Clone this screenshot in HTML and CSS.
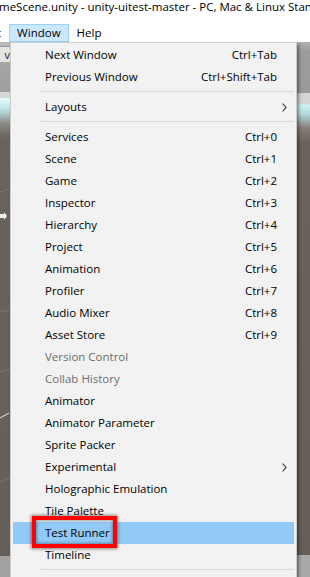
FILE: index.html
```html
<!DOCTYPE html>
<html>

<head>
    <meta charset="utf-8">
    <title>Unity - Window menu</title>
    <link rel="stylesheet" href="styles.css">
</head>

<body>
    <div class="screen">
        <div class="titlebar">meScene.unity - unity-uitest-master - PC, Mac &amp; Linux Standalone</div>

        <div class="menubar">
            <span class="menubar-item">t</span>
            <span class="menubar-item active">Window</span>
            <span class="menubar-item">Help</span>
        </div>

        <div class="workspace">
            <div class="pane pane-left">
                <div class="tool-btn">v</div>
                <svg class="scene-marks" width="10" height="514" viewBox="0 0 10 514">
                    <path d="M0 172 L4 172 L4 170 L7 174 L4 178 L4 176 L0 176 Z" fill="#f4f4f4" />
                    <path d="M0 376 L9 371" stroke="#e8e8e8" stroke-width="1" fill="none" />
                    <path d="M0 150 L10 147 M0 270 L10 268 M0 330 L10 327 M0 440 L10 436" stroke="#7a736d" stroke-width="1" fill="none" />
                </svg>
            </div>
            <div class="pane pane-right"></div>

            <!-- Window dropdown -->
            <div class="dropdown">
                <div class="menu-item"><span>Next Window</span><span class="shortcut">Ctrl+Tab</span></div>
                <div class="menu-item"><span>Previous Window</span><span class="shortcut">Ctrl+Shift+Tab</span></div>
                <div class="menu-sep"></div>
                <div class="menu-item"><span>Layouts</span><span class="shortcut"></span>
                    <svg class="chevron" width="5" height="9" viewBox="0 0 5 9"><path d="M0.5 0.5 L4 4.5 L0.5 8.5" /></svg>
                </div>
                <div class="menu-sep"></div>
                <div class="menu-item"><span>Services</span><span class="shortcut">Ctrl+0</span></div>
                <div class="menu-item"><span>Scene</span><span class="shortcut">Ctrl+1</span></div>
                <div class="menu-item"><span>Game</span><span class="shortcut">Ctrl+2</span></div>
                <div class="menu-item"><span>Inspector</span><span class="shortcut">Ctrl+3</span></div>
                <div class="menu-item"><span>Hierarchy</span><span class="shortcut">Ctrl+4</span></div>
                <div class="menu-item"><span>Project</span><span class="shortcut">Ctrl+5</span></div>
                <div class="menu-item"><span>Animation</span><span class="shortcut">Ctrl+6</span></div>
                <div class="menu-item"><span>Profiler</span><span class="shortcut">Ctrl+7</span></div>
                <div class="menu-item"><span>Audio Mixer</span><span class="shortcut">Ctrl+8</span></div>
                <div class="menu-item"><span>Asset Store</span><span class="shortcut">Ctrl+9</span></div>
                <div class="menu-item disabled"><span>Version Control</span></div>
                <div class="menu-item disabled"><span>Collab History</span></div>
                <div class="menu-item"><span>Animator</span></div>
                <div class="menu-item"><span>Animator Parameter</span></div>
                <div class="menu-item"><span>Sprite Packer</span></div>
                <div class="menu-item"><span>Experimental</span><span class="shortcut"></span>
                    <svg class="chevron" width="5" height="9" viewBox="0 0 5 9"><path d="M0.5 0.5 L4 4.5 L0.5 8.5" /></svg>
                </div>
                <div class="menu-item"><span>Holographic Emulation</span></div>
                <div class="menu-item"><span>Tile Palette</span></div>
                <div class="menu-item selected"><span>Test Runner</span><div class="callout"></div></div>
                <div class="menu-item"><span>Timeline</span></div>
                <div class="menu-sep"></div>
                <div class="menu-rest"></div>
            </div>
        </div>
    </div>
</body>

</html>
```

FILE: styles.css
```css
body {
    margin: 0;
    font-family: "Open Sans", "Noto Sans", sans-serif;
    font-size: 11.5px;
    color: #000;
    background: #fff;
}

.screen {
    width: 310px;
    height: 577px;
    overflow: hidden;
    position: relative;
    background: #fff;
}

.titlebar {
    height: 24px;
    line-height: 14px;
    font-size: 11.5px;
    white-space: nowrap;
    overflow: hidden;
    margin-left: -1px;
}

.menubar {
    height: 18px;
    display: flex;
    white-space: nowrap;
}

.menubar-item {
    line-height: 16px;
    padding: 0 7px;
    border: 1px solid transparent;
}

.menubar-item:first-child {
    padding-left: 0;
    margin-left: -4px;
}

.menubar-item.active {
    background: #cce8ff;
    border-color: #99d1ff;
}

/* editor behind the menu */
.workspace {
    position: relative;
    height: 535px;
    display: flex;
}

.pane {
    height: 100%;
}

.pane-left {
    width: 10px;
    position: relative;
    background: linear-gradient(to bottom,
        #b9b9b9 0, #b9b9b9 4px,
        #e4e4e4 4px, #e4e4e4 20px,
        #a6a6a6 20px, #9f9f9f 50px,
        #d6d6d6 50px, #d6d6d6 56px,
        #e4fbfb 56px, #bfeaec 66px, #8a8783 82px, #6a635d 96px,
        #665e58 514px,
        #a2a2a2 514px);
}

.tool-btn {
    position: absolute;
    top: 4px;
    left: -4px;
    width: 14px;
    height: 15px;
    border-top: 1px solid #9a9a9a;
    line-height: 15px;
    font-size: 11px;
    color: #222;
    text-align: right;
}

.scene-marks {
    position: absolute;
    top: 0;
    left: 0;
}

.pane-right {
    flex: 1;
    background: linear-gradient(to bottom,
        #b0b0b0 0, #9c9c9c 10px, #9a9a9a 51px,
        #d4d4d4 51px, #d4d4d4 62px,
        #cdf1f2 63px, #b2d9dc 72px, #857f7a 86px, #6a635d 100px,
        #665e58 513px,
        #a8a8a8 513px);
}

/* dropdown */
.dropdown {
    position: absolute;
    left: 10px;
    top: 0;
    width: 287px;
    box-sizing: border-box;
    background: #f2f2f2;
    border: 1px solid #cccccc;
    padding: 1px 2px 2px;
    box-shadow: 2px 2px 3px rgba(0, 0, 0, 0.4);
}

.menu-item {
    position: relative;
    height: 22px;
    line-height: 22px;
    display: grid;
    grid-template-columns: 1fr auto 17px;
    align-items: center;
    padding-left: 32px;
    white-space: nowrap;
}

.menu-item.disabled {
    color: #6d6d6d;
}

.menu-item.selected {
    background: #91c9f7;
}

.shortcut {
    text-align: right;
}

.chevron {
    grid-column: 3;
    margin-left: 5px;
    fill: none;
    stroke: #333;
    stroke-width: 1.1;
}

.menu-sep {
    height: 1px;
    background: #d7d7d7;
    margin: 3px 0 4px 28px;
}

.menu-rest {
    height: 22px;
}

.callout {
    position: absolute;
    left: 19px;
    top: -6px;
    width: 85px;
    height: 32px;
    box-sizing: border-box;
    border: 4px solid #ff0000;
    box-shadow: 0 0 3px 1px rgba(0, 0, 0, 0.45), inset 0 0 3px 1px rgba(0, 0, 0, 0.35);
}
```
